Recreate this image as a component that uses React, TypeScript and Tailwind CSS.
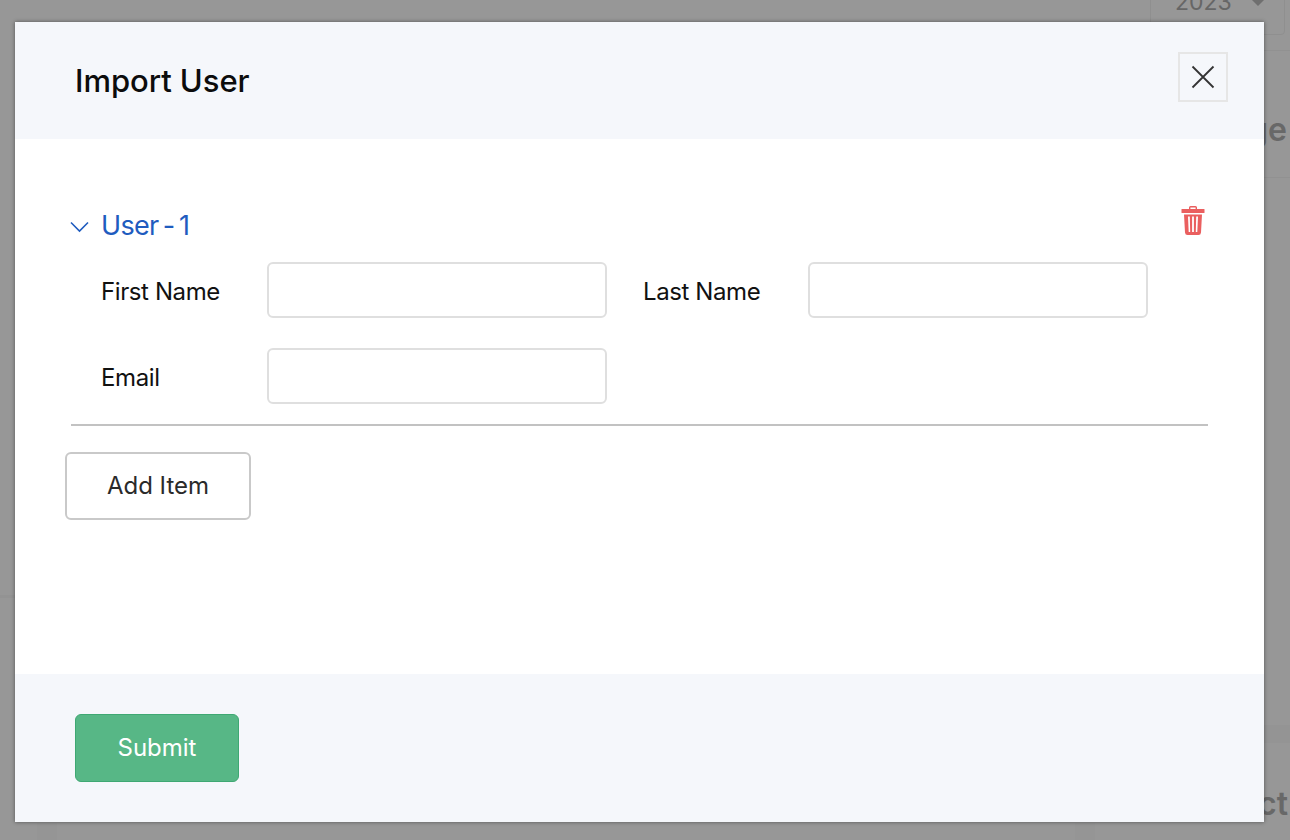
import React from "react";

function Field({ label, labelW }: { label: string; labelW: string }) {
  return (
    <div className="flex items-center">
      <label className={`${labelW} pt-[4px] text-[24px] leading-[30px] text-[#111111] tracking-[-0.4px]`}>{label}</label>
      <input className="w-[340px] h-[56px] rounded-[6px] border-2 border-[#dfdfdf] bg-white" />
    </div>
  );
}

export default function App() {
  return (
    <div className="relative w-[1290px] h-[840px] overflow-hidden bg-[#979797] font-['Inter','Liberation_Sans',sans-serif]">
      {/* dimmed page behind the dialog */}
      <div className="absolute left-[1150px] top-[-20px] w-[135px] h-[55px] border border-[#8f8f8f] rounded-[4px] flex items-center pl-[24px] gap-[17px]">
        <span className="text-[23px] leading-[28px] text-[#666666] mt-[-12px]">2023</span>
        <span className="mt-[-12px] w-0 h-0 border-x-[9px] border-x-transparent border-t-[9px] border-t-[#6f6f6f]"></span>
      </div>
      <div className="absolute left-[1264px] top-[50px] w-[26px] h-px bg-[#919191]"></div>
      <div className="absolute left-[1264px] top-[177px] w-[26px] h-px bg-[#919191]"></div>
      <div className="absolute left-[1264px] top-[725px] w-[26px] h-[18px] bg-[#949494]"></div>
      <div className="absolute left-0 top-[595px] w-[15px] h-[3px] bg-[#939393]"></div>
      <div className="absolute left-[37px] top-[823px] w-[20px] h-[17px] bg-[#959595]"></div>
      <div className="absolute left-[1075px] top-[823px] w-[20px] h-[17px] bg-[#959595]"></div>
      <div className="absolute right-[3px] top-[110px] text-[32px] leading-[40px] font-semibold text-[#686868] whitespace-nowrap">
        ge
      </div>
      <div className="absolute right-[2px] top-[784px] text-[32px] leading-[40px] font-semibold text-[#686868] whitespace-nowrap">
        ct
      </div>

      {/* dialog */}
      <div className="absolute left-[15px] top-[22px] w-[1249px] h-[800px] bg-white flex flex-col shadow-[0_0_4px_rgba(0,0,0,0.45)]">
        <header className="h-[117px] bg-[#f5f7fb] flex items-start justify-between pl-[60px] pr-[36px]">
          <h1 className="mt-[37px] text-[31px] leading-[44px] font-medium text-[#0c0c0c] tracking-[-0.05px]">Import User</h1>
          <button className="mt-[30px] w-[50px] h-[50px] border-2 border-[#e6e6e6] flex items-center justify-center">
            <svg width="24" height="24" viewBox="0 0 24 24" fill="none" stroke="#333333" strokeWidth="1.8">
              <path d="M1.5 1.5 L22.5 22.5 M22.5 1.5 L1.5 22.5" />
            </svg>
          </button>
        </header>

        <main className="flex-1 relative pt-[67px] pl-[56px]">
          <div className="flex items-center h-[38px] w-[1137px]">
            <svg width="19" height="12" viewBox="0 0 19 12" fill="none" stroke="#1f5cbf" strokeWidth="1.6" className="mt-[4px] ml-[-1px]">
              <path d="M1 1.5 L9.5 10 L18 1.5" />
            </svg>
            <span className="ml-[12px] pt-[2px] text-[27px] leading-[38px] text-[#1f5cbf] tracking-[-0.7px] [word-spacing:-2.5px]">User - 1</span>
            <svg width="24" height="32" viewBox="0 0 24 32" className="ml-auto mr-[3px] mt-[-8px]" fill="#ea5f5f">
              <path d="M8 4 V2.5 Q8 1 9.5 1 H14.5 Q16 1 16 2.5 V4 H14.6 V2.4 H9.4 V4 Z" />
              <rect x="0.5" y="4" width="23" height="4" rx="0.6" />
              <path fillRule="evenodd" d="M3 9.5 H21 L20 27.5 Q19.8 30 17.5 30 H6.5 Q4.2 30 4 27.5 Z M7 11.5 L7.7 27 H9.2 L8.8 11.5 Z M11.1 11.5 V27 H12.9 V11.5 Z M15.2 11.5 L14.8 27 H16.3 L17 11.5 Z" />
            </svg>
          </div>

          <div className="pl-[30px] mt-[18px] flex flex-col gap-[30px]">
            <div className="flex gap-[36px]">
              <Field label="First Name" labelW="w-[166px]" />
              <Field label="Last Name" labelW="w-[165px]" />
            </div>
            <Field label="Email" labelW="w-[166px]" />
          </div>

          <hr className="mt-[20px] w-[1137px] border-0 h-[2px] bg-[#c2c2c2]" />

          <button className="block mt-[26px] ml-[-6px] w-[186px] h-[68px] rounded-[6px] border-2 border-[#c9c9c9] bg-white text-[24px] text-[#2a2a2a]">
            Add Item
          </button>
        </main>

        <footer className="h-[148px] bg-[#f5f7fb] pl-[60px] pt-[40px]">
          <button className="w-[164px] h-[68px] rounded-[6px] border border-[#3fa873] bg-[#57b786] text-[24px] text-white">
            Submit
          </button>
        </footer>
      </div>
    </div>
  );
}
